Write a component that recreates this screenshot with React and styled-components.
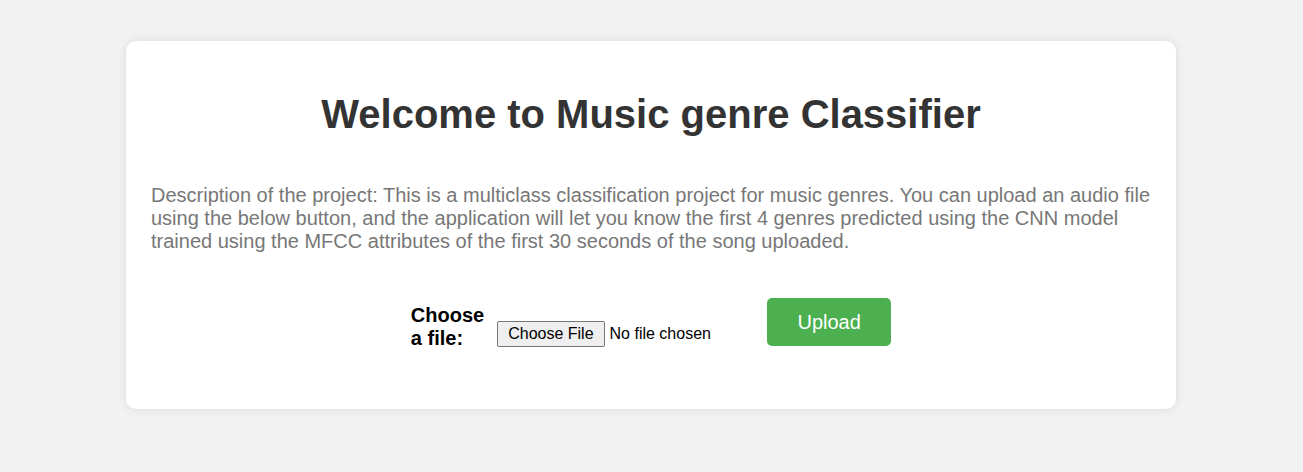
import React from 'react'
import styled, { createGlobalStyle } from 'styled-components'

const GlobalStyle = createGlobalStyle`
    body {
        margin: 0;
        background-color: #f2f2f2;
        font-family: 'Liberation Sans', Arial, sans-serif;
    }
`

const Page = styled.div`
    padding: 41px 1px 63px 0;
    display: flex;
    justify-content: center;
`

const Card = styled.div`
    width: 1000px;
    padding: 25px;
    background-color: #fff;
    border-radius: 10px;
    box-shadow: 0 0 10px rgba(0, 0, 0, 0.1);
`

const Title = styled.h1`
    margin: 26px 0 0;
    text-align: center;
    font-size: 40px;
    font-weight: bold;
    color: #333;
`

const Description = styled.p`
    margin: 47px 0 0;
    font-size: 20px;
    color: #777;
`

const UploadForm = styled.form`
    margin: 45px 0 34px;
    display: flex;
    justify-content: center;
    align-items: flex-start;
`

const Label = styled.label`
    width: min-content;
    margin: 6px 13px 0 0;
    font-size: 20px;
    font-weight: bold;
    color: #000;
`

const FileInput = styled.input`
    width: 250px;
    margin: 23px 20px 0 0;
    font-size: 16px;
    font-family: 'Liberation Sans', Arial, sans-serif;
    color: #000;

    &::file-selector-button {
        margin: 0 5px 0 0;
        padding: 3px 10px;
        border: 1px solid #767676;
        border-radius: 2px;
        background-color: #efefef;
        font-size: 16px;
        font-family: 'Liberation Sans', Arial, sans-serif;
        color: #000;
    }
`

const UploadButton = styled.button`
    width: 124px;
    padding: 12px 0;
    line-height: 24px;
    border: none;
    border-radius: 5px;
    background-color: #4caf50;
    color: #fff;
    font-size: 20px;
    font-family: 'Liberation Sans', Arial, sans-serif;
    cursor: pointer;
`

const App = () => {
    return (
        <>
            <GlobalStyle />
            <Page>
                <Card>
                    <Title>Welcome to Music genre Classifier</Title>
                    <Description>
                        Description of the project: This is a multiclass classification project for music genres. You can upload an audio file using the below button, and the application will let you know the first 4 genres predicted using the CNN model trained using the MFCC attributes of the first 30 seconds of the song uploaded.
                    </Description>
                    <UploadForm onSubmit={(e) => e.preventDefault()}>
                        <Label htmlFor="file">Choose a file:</Label>
                        <FileInput type="file" id="file" name="file" />
                        <UploadButton type="submit">Upload</UploadButton>
                    </UploadForm>
                </Card>
            </Page>
        </>
    )
}

export default App
